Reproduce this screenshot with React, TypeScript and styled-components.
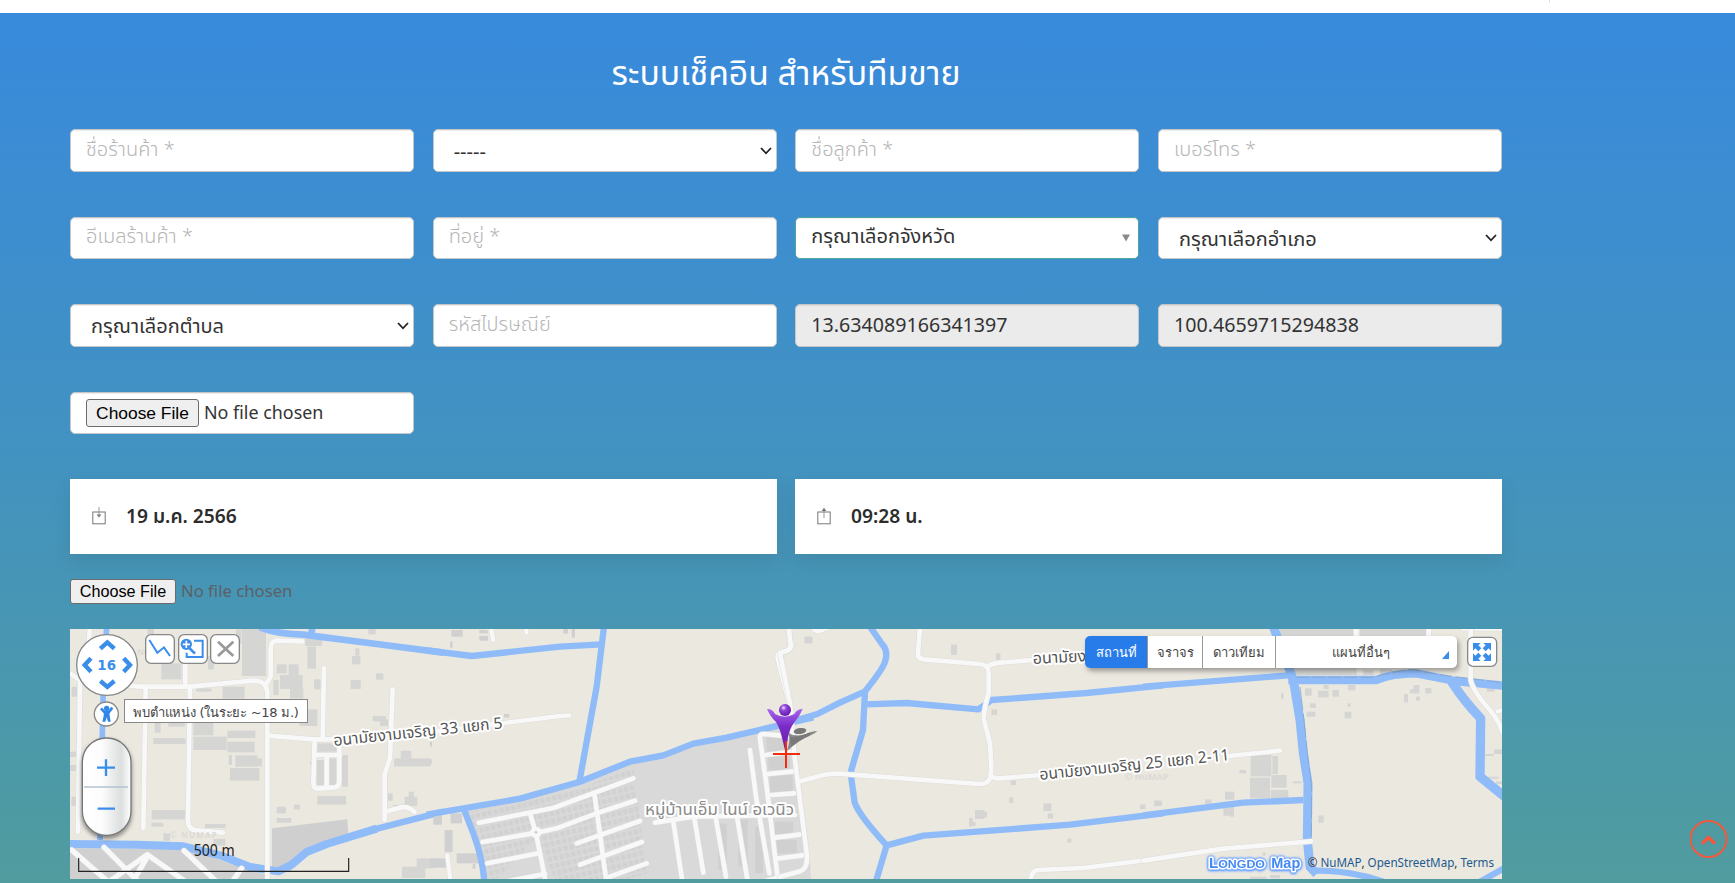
import React from "react";
import styled, { createGlobalStyle } from "styled-components";

const GlobalStyle = createGlobalStyle`
  * { box-sizing: border-box; }
  html, body { margin: 0; padding: 0; height: 883px; overflow: hidden; }
  body { background: #fff; font-family: "Noto Sans", "Noto Sans Thai", sans-serif; color: #333; }
`;

const Page = styled.div`
  height: 883px;
  display: flex;
  flex-direction: column;
`;

const TopStrip = styled.div`
  flex: none;
  height: 13px;
  background: #fff;
  padding-left: 1549px;
  &::before {
    content: "";
    display: block;
    width: 1px;
    height: 3px;
    background: #e4e4e4;
  }
`;

const Section = styled.main`
  flex: none;
  height: 870px;
  padding: 0 233px 0 70px;
  background: linear-gradient(180deg, #388adc 0%, #4292c2 49%, #509c9e 100%);
`;

const Title = styled.h1`
  margin: 0;
  height: 116px;
  padding-top: 34px;
  text-align: center;
  font-size: 33.7px;
  line-height: 50px;
  font-weight: 400;
  color: #fff;
`;

const Fields = styled.div`
  display: grid;
  grid-template-columns: repeat(4, 344px);
  grid-template-rows: 43px 42px 43px 42px;
  justify-content: space-between;
  row-gap: 45px;
`;

const Field = styled.div<{ $tone?: "readonly" | "active" }>`
  display: flex;
  align-items: center;
  padding: 0 4px 0 15px;
  background: ${(p) => (p.$tone === "readonly" ? "#ebebeb" : "#fff")};
  border: 1px solid ${(p) => (p.$tone === "active" ? "#4ba79a" : "#c4c6c8")};
  border-radius: 5px;
  box-shadow: inset 0 1px 1px rgba(0, 0, 0, 0.075);
`;

const Value = styled.span<{ $muted?: boolean; $drop?: number; $indent?: number; $size?: number }>`
  flex: 1;
  white-space: nowrap;
  font-size: ${(p) => p.$size ?? 20}px;
  font-weight: ${(p) => (p.$muted ? 300 : 400)};
  line-height: 26px;
  padding-left: ${(p) => p.$indent ?? 0}px;
  margin-top: ${(p) => p.$drop ?? -4}px;
  color: ${(p) => (p.$muted ? "#b6b6b6" : "#333")};
`;

const FileButton = styled.span<{ $small?: boolean }>`
  display: flex;
  align-items: center;
  justify-content: center;
  width: ${(p) => (p.$small ? 106 : 113)}px;
  height: ${(p) => (p.$small ? 25 : 28)}px;
  font: ${(p) => (p.$small ? 16.2 : 17.4)}px "Liberation Sans", sans-serif;
  color: #000;
  background: #efefef;
  border: 1px solid #6b6b6b;
  border-radius: 3px;
`;

const FileName = styled.span<{ $small?: boolean }>`
  margin: -2px 0 0 5px;
  font-size: ${(p) => (p.$small ? 16.7 : 17.9)}px;
  color: ${(p) => (p.$small ? "#5b6165" : "#333")};
  line-height: 25px;
`;

const Cards = styled.div`
  display: grid;
  grid-template-columns: 707px 707px;
  justify-content: space-between;
  margin-top: 45px;
`;

const Card = styled.div`
  display: flex;
  align-items: center;
  height: 75px;
  padding-left: 22px;
  background: #fff;
  box-shadow: 0 8px 16px rgba(40, 70, 80, 0.14);
`;

const CardText = styled.strong`
  margin: 0 0 0 20px;
  font-size: 19.2px;
  font-weight: 600;
  color: #2c2c2c;
`;

const FileRow = styled.div`
  display: flex;
  align-items: center;
  height: 25px;
  margin: 25px 0;
`;

const MapBox = styled.div`
  position: relative;
  height: 250px;
  overflow: hidden;
  background: #ebe8e0;
  font-family: "DejaVu Sans", sans-serif;
`;

const Canvas = styled.svg`
  display: block;
`;

const MapTabs = styled.div`
  position: absolute;
  left: 1015px;
  top: 7px;
  display: flex;
  height: 32px;
  border-radius: 5px;
  background: #fff;
  box-shadow: 2px 3px 5px rgba(0, 0, 0, 0.35);
`;

const MapTab = styled.div<{ $width: number; $active?: boolean }>`
  position: relative;
  width: ${(p) => p.$width}px;
  display: flex;
  align-items: center;
  justify-content: center;
  font-size: 13px;
  white-space: nowrap;
  color: ${(p) => (p.$active ? "#fff" : "#444")};
  background: ${(p) => (p.$active ? "#277cea" : "transparent")};
  border-radius: ${(p) => (p.$active ? "5px 0 0 5px" : "0")};
  border-left: ${(p) => (p.$active ? "none" : "1px solid #999")};
`;

const MoreLabel = styled.span`
  margin-right: 11px;
`;

const Corner = styled.i`
  position: absolute;
  right: 8px;
  bottom: 9px;
  border-left: 7px solid transparent;
  border-bottom: 8px solid #3a8de8;
`;

const Tooltip = styled.div`
  position: absolute;
  left: 54px;
  top: 70px;
  width: 184px;
  height: 24px;
  display: flex;
  align-items: center;
  justify-content: center;
  padding-top: 2px;
  font-size: 13px;
  letter-spacing: -0.25px;
  white-space: nowrap;
  color: #444;
  background: #fff;
  border: 1px solid #888;
`;

const Logo = styled.g`
  filter: drop-shadow(0 0 1px #5c9bff) drop-shadow(0 0 1px #5c9bff) drop-shadow(0 1px 0.5px #8fb9ff);
`;

const ToTop = styled.div`
  position: absolute;
  left: 1690px;
  top: 820px;
  width: 38px;
  height: 38px;
`;

type Rect = [number, number, number, number];

function Buildings({ items, fill = "#d5d5d4" }: { items: Rect[]; fill?: string }) {
  return (
    <g fill={fill}>
      {items.map(([x, y, w, h], i) => (
        <rect key={i} x={x} y={y} width={w} height={h} />
      ))}
    </g>
  );
}

function Roads({ paths, width = 14 }: { paths: string[]; width?: number }) {
  return (
    <g fill="none" strokeLinecap="round" strokeLinejoin="round">
      {paths.map((d) => (
        <path key={"c" + d} d={d} stroke="#dddcd9" strokeWidth={width + 3} />
      ))}
      {paths.map((d) => (
        <path key={d} d={d} stroke="#f8f8f8" strokeWidth={width} />
      ))}
    </g>
  );
}

function Canals({ paths, width = 16 }: { paths: string[]; width?: number }) {
  return (
    <g fill="none" stroke="#8fbcf9" strokeWidth={width} strokeLinejoin="round">
      {paths.map((d) => (
        <path key={d} d={d} />
      ))}
    </g>
  );
}

const westBuildings: Rect[] = [
  [304, 130, 60, 48], [262, 27, 20, 16], [546, 27, 72, 141], [528, 28, 16, 44], [458, 60, 16, 20], [480, 77, 22, 34], [444, 108, 18, 40],
  [650, 133, 30, 27], [686, 133, 30, 66], [660, 165, 68, 42], [640, 180, 16, 45], [690, 205, 40, 30], [876, 108, 25, 25], [886, 85, 12, 22],
  [736, 56, 50, 22], [742, 80, 26, 66], [925, 27, 22, 16], [948, 160, 22, 19], [872, 180, 30, 27], [762, 178, 20, 30], [718, 268, 54, 50],
  [488, 200, 66, 36], [500, 240, 54, 24], [400, 306, 60, 40], [400, 350, 100, 40], [502, 332, 84, 22], [502, 365, 82, 32],
  [280, 354, 96, 18], [284, 308, 18, 30], [325, 306, 50, 14], [526, 406, 66, 34], [506, 405, 10, 30], [510, 444, 88, 38], [590, 415, 16, 24],
  [772, 528, 86, 26], [846, 405, 18, 95], [808, 415, 20, 80], [772, 370, 70, 25], [770, 420, 22, 75], [275, 570, 100, 28], [274, 608, 36, 12],
  [650, 594, 44, 14], [650, 560, 28, 20], [702, 554, 18, 14], [435, 612, 62, 12], [460, 657, 36, 20], [310, 640, 20, 22],
  [1002, 415, 110, 24], [1022, 392, 32, 24], [938, 288, 40, 16], [960, 298, 24, 20], [1000, 555, 20, 12], [1034, 530, 38, 28], [984, 520, 14, 22], [1046, 515, 16, 20], [1120, 585, 20, 15],
  [1026, 740, 70, 34], [1070, 715, 50, 30], [408, 205, 46, 10], [750, 425, 5, 10], [35, 200, 20, 30], [30, 395, 20, 16], [30, 435, 20, 18], [34, 530, 18, 28],
];

const MapTiles = () => (
  <Canvas width="1432" height="250" viewBox="0 0 1432 250" fontFamily='"Noto Sans", "Noto Sans Thai", sans-serif'>
    <defs>
      <pattern id="plots" width="18" height="22" patternUnits="userSpaceOnUse" patternTransform="rotate(-13)">
        <rect x="2" y="3" width="13" height="15" fill="#d1d1d1" />
      </pattern>
      <linearGradient id="pin" x1="0" x2="0" y1="0" y2="1">
        <stop offset="0" stopColor="#a765ee" />
        <stop offset="0.4" stopColor="#7a2bc6" />
        <stop offset="1" stopColor="#6a1cae" />
      </linearGradient>
      <radialGradient id="head" cx="0.38" cy="0.32" r="0.7">
        <stop offset="0" stopColor="#ecd8ff" />
        <stop offset="0.35" stopColor="#8d44d6" />
        <stop offset="1" stopColor="#6518ae" />
      </radialGradient>
      <linearGradient id="pill" x1="0" x2="1">
        <stop offset="0" stopColor="#fff" />
        <stop offset="0.4" stopColor="#fcfcfc" />
        <stop offset="0.8" stopColor="#dcdfdf" />
        <stop offset="1" stopColor="#fff" />
      </linearGradient>
      <filter id="drop" x="-20%" y="-20%" width="150%" height="150%">
        <feDropShadow dx="0" dy="8" stdDeviation="6" floodOpacity="0.45" />
      </filter>
    </defs>

    {/* western blocks */}
    <g transform="translate(-10 -9) scale(.33333)">
      <Buildings items={westBuildings} />
      <path d="M30 685L390 688L520 735L620 765V800H30Z" fill="#d0d0d0" />
      <path d="M636 625L862 598L866 658L780 680L720 720L690 755L636 745Z" fill="#cfcfcf" />
      <Canals paths={["M140 20L130 200L120 660"]} width={17} />
      <Canals
        width={24}
        paths={["M30 672L230 674L370 679L480 706L570 741L655 754L695 734L740 696L800 672L950 626"]}
      />
      <Canals width={19} paths={["M940 629L1150 575"]} />
      <Canals width={20} paths={["M600 22Q650 42 730 44L950 72L1150 98", "M758 20L752 48"]} />
      <Roads
        paths={[
          "M90 20L86 70L60 190L54 635", "M376 125V198L390 205L384 600Q384 632 415 632L490 638", "M30 160L60 180L240 200L390 200L580 182Q618 182 622 215V780",
          "M727 64L650 62Q632 64 632 85V170L618 192", "M257 205L250 625", "M792 145L788 355", "M624 347L760 358L844 358", "M764 360L760 490Q760 506 775 506L825 502Q838 500 838 480V358", "M766 405H840", "M800 410V498",
          "M998 208L990 415L974 462V600", "M976 575L1025 562Q1046 558 1064 576",
        ]}
      />
      <Roads paths={["M132 682L240 790", "M140 790L262 704L370 780", "M215 790L258 718", "M372 692L475 790", "M35 690L150 790", "M520 780L545 745"]} width={15} />
      <text x="330" y="655" fontSize="24" fontWeight="700" fill="#dcdad4" textLength="140">© NUMAP</text>
      <text x="232" y="104" fontSize="24" fontWeight="700" fill="#dcdad4">NuMA</text>
    </g>

    {/* housing estate */}
    <g transform="translate(360 -9) scale(.33333)">
      <path d="M100 568L270 538L450 488L600 424L700 405L790 371L1090 310L1142 740L1142 800H170Z" fill="#d9d9d9" />
      <path d="M118 575L450 505L610 445L650 760L560 790H380L320 650L200 780L170 790L140 640Z" fill="url(#plots)" />
      <Buildings items={[
        [64, 30, 34, 20], [60, 65, 8, 18], [148, 30, 25, 10], [148, 48, 26, 14], [400, 27, 14, 14], [425, 27, 10, 26], [222, 282, 16, 10], [1124, 50, 22, 20],
        [10, 580, 26, 34], [62, 580, 34, 30], [44, 630, 24, 66], [80, 700, 68, 30], [0, 715, 50, 28], [128, 732, 8, 14], [0, 365, 6, 14], [0, 418, 5, 14],
        [1010, 350, 60, 44], [1015, 410, 65, 40], [1020, 465, 68, 50], [1035, 605, 55, 38], [1040, 660, 60, 40], [925, 600, 28, 140], [975, 620, 24, 140], [865, 610, 25, 140],
      ]} fill="#d0d0d0" />
      <Roads paths={["M182 20L190 60", "M288 20L290 38", "M-20 338L230 308L390 288L418 286", "M52 706L62 790"]} width={13} />
      <Canals paths={["M-10 91L125 108L390 80L515 73", "M522 20L500 200L448 486", "M-10 584L270 536L448 486L600 425L700 406L790 371L890 353L1150 292", "M101 566L130 640Q160 720 163 790"]} width={19} />
      <Roads paths={[
        "M146 608L370 564L610 475", "M158 666L320 638L380 625L500 580L615 542", "M172 730L325 700", "M300 580L318 640L348 790", "M200 790L345 762", "M494 528L530 790",
        "M440 670L630 603", "M450 734L636 666", "M540 770L650 730", "M675 608L790 590L1095 585", "M730 605L758 790", "M794 600L820 758", "M858 598L888 770", "M922 595L954 790", "M960 390L978 530L1018 760",
        "M1090 350L1000 342Q988 342 990 356L1010 500L1042 765", "M1075 20L1085 75Q1086 90 1068 93L1050 98Q1040 103 1044 118L1080 260L1096 420L1130 700Q1134 745 1110 754L1000 785",
        "M1008 405L1090 395", "M1016 462L1090 454", "M1026 525L1092 520", "M1035 653L1108 644", "M1042 716L1118 706",
      ]} />
      <circle cx="318" cy="637" r="17" fill="#f8f8f8" />
      <circle cx="318" cy="637" r="4" fill="#ccc" />
    </g>

    {/* fields east of the estate */}
    <g transform="translate(710 -9) scale(.33333)">
      <Buildings items={[
        [74, 52, 24, 16], [513, 74, 18, 31], [648, 100, 13, 20], [634, 268, 17, 17], [692, 481, 16, 14], [688, 532, 12, 17], [585, 570, 28, 27], [608, 575, 13, 17],
        [567, 594, 12, 25], [575, 606, 12, 12], [790, 550, 24, 23], [803, 580, 16, 16], [862, 656, 12, 12], [1080, 553, 16, 14], [1122, 542, 16, 16],
      ]} />
      <Canals width={19} paths={[
        "M270 20L306 72Q325 92 316 122Q310 146 254 215L180 248L112 282L50 301", "M255 215L249 330L214 450V475L224 548Q240 590 320 676L286 790",
        "M255 253L380 249L595 268L635 240L920 219L1150 196", "M320 676L430 647L870 614L1150 580",
      ]} />
      <Roads paths={[
        "M26 20L32 72Q34 88 20 92L0 98", "M98 20Q105 36 120 32L150 20", "M60 484L130 465Q165 458 205 463L600 492Q630 490 632 466L634 440L630 370L612 300Q610 270 626 220V158Q626 135 600 132L430 118Q412 114 414 100L420 20",
        "M622 142Q632 130 660 128L760 120", "M632 462Q636 478 660 475L780 465", "M752 790Q752 750 775 750L910 744L1150 714", "M0 100L30 250L45 420L80 700Q86 745 60 754L0 770",
      ]} />
      <text x="1035" y="480" fontSize="27" fontWeight="700" fill="#dcdad4">© NuMAP</text>
    </g>

    {/* eastern canal junction */}
    <g transform="translate(1080 -9) scale(.33333)">
      <Buildings items={[
        [390, 20, 220, 40], [630, 20, 200, 40], [430, 60, 190, 105], [302, 405, 62, 64], [367, 408, 17, 54], [364, 465, 46, 38], [300, 473, 60, 62], [362, 510, 53, 24],
        [225, 515, 28, 24], [220, 545, 22, 42], [240, 560, 12, 30], [12, 542, 24, 16], [165, 538, 20, 15], [505, 586, 16, 22], [268, 450, 20, 10], [393, 220, 8, 16], [428, 484, 27, 6],
        [470, 275, 26, 15], [480, 250, 18, 14], [465, 205, 20, 22], [504, 212, 32, 20], [520, 195, 16, 12], [547, 210, 20, 20], [584, 275, 20, 20], [593, 250, 9, 10], [594, 195, 22, 16],
        [762, 222, 12, 25], [780, 208, 24, 12], [790, 195, 18, 25], [798, 230, 12, 12], [826, 204, 18, 16], [690, 148, 36, 16], [640, 150, 30, 15], [1010, 190, 24, 25], [1032, 388, 24, 14], [1005, 402, 26, 6], [1015, 470, 30, 6], [1038, 484, 18, 8],
        [300, 770, 50, 10], [360, 765, 30, 10], [338, 697, 8, 10],
      ]} />
      <Roads paths={["M618 20V50", "M836 20V50", "M940 25H1056"]} width={14} />
      <Canals width={27} paths={["M370 20L430 180L450 300L460 400L474 490L472 660L480 740L500 762"]} />
      <Canals width={25} paths={["M415 180L680 180Q725 160 800 160L915 183L1070 198"]} />
      <Canals width={28} paths={["M905 185Q940 240 992 295L990 470L1070 535"]} />
      <Canals width={19} paths={["M-20 200L415 166", "M-20 586L280 548L460 540", "M490 752Q600 750 700 785", "M990 785L1070 740"]} />
      <g fill="none" stroke="#86a6c8" strokeWidth="2.5">
        <path d="M450 200L463 310L472 400L485 500L484 650" strokeDasharray="70 12" />
        <path d="M440 172H670Q750 149 790 149L860 163L1056 188" strokeDasharray="38 10" />
      </g>
      <Roads paths={["M-20 722L220 686L484 664", "M236 408L390 392", "M962 20V180Q970 215 1020 270Q1045 300 1060 340"]} />
      <Roads paths={["M1042 274L1070 268"]} width={12} />
    </g>

    {/* street names */}
    <g fill="#555" stroke="#fff" strokeWidth="4" strokeLinejoin="round" paintOrder="stroke" fontSize="16">
      <text transform="translate(264 117) rotate(-6)" textLength="170" lengthAdjust="spacingAndGlyphs">อนามัยงามเจริญ 33 แยก 5</text>
      <text transform="translate(963 35) rotate(-3)">อนามัยงามเจริญ</text>
      <text transform="translate(970 151) rotate(-6)" textLength="191" lengthAdjust="spacingAndGlyphs">อนามัยงามเจริญ 25 แยก 2-11</text>
      <text x="575" y="186" fill="#8a8a8a" textLength="149" lengthAdjust="spacingAndGlyphs">หมู่บ้านเอ็ม ไนน์ อเวนิว</text>
    </g>

    {/* marker and crosshair */}
    <g transform="translate(360 -9) scale(.33333)">
      <path d="M1070 394Q1084 360 1074 338Q1100 356 1140 337V345Q1104 363 1070 394Z" fill="#777" opacity=".85" />
      <path d="M1080 352Q1110 350 1125 343Q1148 333 1162 333Q1150 344 1118 357Q1100 366 1084 380Z" fill="#777" opacity=".85" />
      <ellipse cx="1110" cy="333" rx="19" ry="9" transform="rotate(-8 1110 333)" fill="#777" />
      <path d="M1011 267Q1028 267 1035 282Q1064 298 1093 282Q1101 267 1118 267Q1110 287 1094 306Q1078 326 1073 357L1067 399L1057 357Q1050 326 1038 306Q1022 292 1011 267Z" fill="url(#pin)" />
      <circle cx="1065" cy="270" r="18" fill="url(#head)" />
      <path d="M1029 402H1110M1068 363V444" stroke="#f32c0d" strokeWidth="6" />
    </g>

    {/* navigation controls */}
    <g transform="translate(-10 -9) scale(.33333)">
      <circle cx="141" cy="135" r="91" fill="#fff" stroke="#888" strokeWidth="4" />
      <g fill="none" stroke="#3a8ee9" strokeWidth="13">
        <path d="M121 86L142 67L163 86M121 183L142 201L163 183M93 115L74 135L93 155M191 115L210 135L191 155" />
      </g>
      <text x="140" y="151" textAnchor="middle" fontFamily='"DejaVu Sans", sans-serif' fontWeight="700" fontSize="43" fill="#3a8ee9" textLength="56" lengthAdjust="spacingAndGlyphs">16</text>
      <circle cx="139" cy="282" r="36" fill="#fff" stroke="#888" strokeWidth="4" />
      <circle cx="140" cy="265" r="8" fill="#2f88e8" />
      <path d="M123 265L133 276H147L157 263" fill="none" stroke="#2f88e8" strokeWidth="8" />
      <path d="M132 272H148L149 288L152 305H144L140 292L136 305H127L131 288Z" fill="#2f88e8" />
      <rect x="67" y="354" width="146" height="292" rx="72" fill="url(#pill)" stroke="#777" strokeWidth="4" filter="url(#drop)" />
      <path d="M72 501H204" stroke="#b5c2cd" strokeWidth="4" />
      <path d="M111 443H165M138 418V468M113 566H165" stroke="#3a8ee9" strokeWidth="7" />
      <g fill="#fff" stroke="#888" strokeWidth="4">
        <rect x="257" y="44" width="86" height="86" rx="16" />
        <rect x="356" y="44" width="86" height="86" rx="16" />
        <rect x="452" y="44" width="86" height="86" rx="16" />
      </g>
      <g fill="none" stroke="#3a8ee9" strokeWidth="6">
        <path d="M268 60L292 98L312 82L330 108" />
        <path d="M402 62H428V111H380V98" />
        <path d="M386 82L405 101" strokeWidth="8" />
      </g>
      <circle cx="379" cy="73" r="17" fill="#3a8ee9" />
      <path d="M368 73H390M379 62V84" stroke="#fff" strokeWidth="5" />
      <path d="M474 65L520 108M520 65L474 108" stroke="#999" strokeWidth="8" />
      <path d="M56 714V754H866V714" fill="none" stroke="#222" strokeWidth="3.5" />
      <text x="401" y="708" fontFamily='"Noto Sans", sans-serif' fontSize="46" fill="#222" textLength="123" lengthAdjust="spacingAndGlyphs">500 m</text>
    </g>

    {/* full screen and attribution */}
    <g transform="translate(1080 -9) scale(.33333)">
      <rect x="953" y="52" width="87" height="87" rx="16" fill="#fff" stroke="#888" strokeWidth="4" />
      <path
        d="M969 69H992L985 76L994 85L985 94L976 85L969 92ZM1023 69V92L1016 85L1007 94L998 85L1007 76L1000 69ZM969 123V100L976 107L985 98L994 107L985 116L992 123ZM1023 123H1000L1007 116L998 107L1007 98L1016 107L1023 100Z"
        fill="#3a8ee9"
      />
      <text x="473" y="740" fontFamily='"Noto Sans", sans-serif' fontSize="36" fill="#1c5a8e" textLength="559" lengthAdjust="spacingAndGlyphs">
        <tspan fill="#333">© </tspan>NuMAP<tspan fill="#333">, </tspan>OpenStreetMap<tspan fill="#333">, </tspan>Terms
      </text>
    </g>
    <Logo fill="#4389f4" stroke="#fff" strokeWidth="3" strokeLinejoin="round" paintOrder="stroke" fontFamily='"Liberation Sans", sans-serif' fontWeight="700">
      <text x="1139" y="239.3" fontSize="14.3" textLength="56" lengthAdjust="spacingAndGlyphs">L<tspan fontSize="11.7">ONGDO</tspan></text>
      <text x="1201.3" y="239.3" fontSize="14.3" textLength="29" lengthAdjust="spacingAndGlyphs">Map</text>
    </Logo>
  </Canvas>
);

const Chevron = () => (
  <svg width="12" height="8" viewBox="0 0 12 8">
    <path d="M1 1L6 6.3L11 1" fill="none" stroke="#222" strokeWidth="1.8" />
  </svg>
);

const CaretIcon = styled.svg`
  margin-right: 2px;
`;

const Caret = () => (
  <CaretIcon width="12" height="8" viewBox="0 0 12 8">
    <path d="M2 0.5H10L6 7.5Z" fill="#8a8a8a" />
  </CaretIcon>
);

const TrayGlyph = styled.svg`
  margin-top: -2px;
`;

const TrayIcon = ({ up }: { up?: boolean }) => (
  <TrayGlyph width="14" height="18" viewBox="0 0 14 18" fill="none" stroke="#777">
    <rect x="0.8" y="5" width="12.4" height="11.8" />
    {up ? (
      <>
        <path d="M7 11V2" stroke="#999" />
        <path d="M4.6 4L7 0.8L9.4 4Z" fill="#777" stroke="none" />
      </>
    ) : (
      <>
        <path d="M7 0V9" stroke="#999" />
        <path d="M4.6 7.4H9.4L7 10.4Z" fill="#777" stroke="none" />
      </>
    )}
  </TrayGlyph>
);

export default function App() {
  return (
    <Page>
      <GlobalStyle />
      <TopStrip />
      <Section>
        <Title>ระบบเช็คอิน สำหรับทีมขาย</Title>
        <Fields>
          <Field><Value $muted>ชื่อร้านค้า *</Value></Field>
          <Field><Value $indent={5} $drop={3}>-----</Value><Chevron /></Field>
          <Field><Value $muted>ชื่อลูกค้า *</Value></Field>
          <Field><Value $muted>เบอร์โทร *</Value></Field>
          <Field><Value $muted>อีเมลร้านค้า *</Value></Field>
          <Field><Value $muted>ที่อยู่ *</Value></Field>
          <Field $tone="active"><Value>กรุณาเลือกจังหวัด</Value><Caret /></Field>
          <Field><Value $indent={5} $drop={1}>กรุณาเลือกอำเภอ</Value><Chevron /></Field>
          <Field><Value $indent={5} $drop={1}>กรุณาเลือกตำบล</Value><Chevron /></Field>
          <Field><Value $muted>รหัสไปรษณีย์</Value></Field>
          <Field $tone="readonly"><Value $size={19.65} $drop={-2}>13.634089166341397</Value></Field>
          <Field $tone="readonly"><Value $size={19.65} $drop={-2}>100.4659715294838</Value></Field>
          <Field><FileButton>Choose File</FileButton><FileName>No file chosen</FileName></Field>
        </Fields>
        <Cards>
          <Card><TrayIcon /><CardText>19 ม.ค. 2566</CardText></Card>
          <Card><TrayIcon up /><CardText>09:28 น.</CardText></Card>
        </Cards>
        <FileRow><FileButton $small>Choose File</FileButton><FileName $small>No file chosen</FileName></FileRow>
        <MapBox>
          <MapTiles />
          <Tooltip>พบตำแหน่ง (ในระยะ ~18 ม.)</Tooltip>
          <MapTabs>
            <MapTab $active $width={62}>สถานที่</MapTab>
            <MapTab $width={55}>จราจร</MapTab>
            <MapTab $width={73}>ดาวเทียม</MapTab>
            <MapTab $width={182}><MoreLabel>แผนที่อื่นๆ</MoreLabel><Corner /></MapTab>
          </MapTabs>
        </MapBox>
      </Section>
      <ToTop>
        <svg width="38" height="38" viewBox="0 0 38 38" fill="none" stroke="#f3573c">
          <circle cx="18.5" cy="19" r="18" strokeWidth="2" />
          <path d="M12 23.5L18.5 17.5L25 23.5" strokeWidth="3.4" />
        </svg>
      </ToTop>
    </Page>
  );
}
